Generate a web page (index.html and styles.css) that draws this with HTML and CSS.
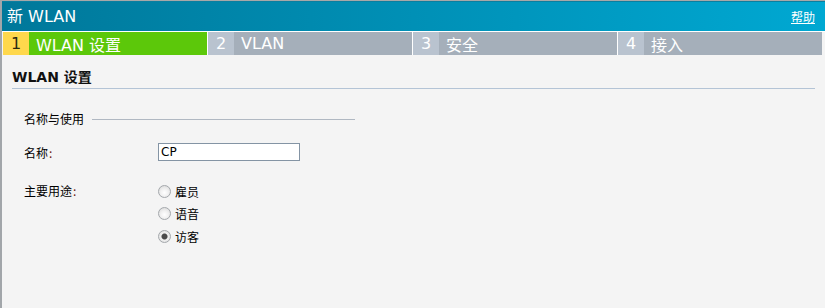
FILE: index.html
```html
<!DOCTYPE html>
<html lang="zh">
<head>
<meta charset="utf-8">
<title>新 WLAN</title>
<link rel="stylesheet" href="styles.css">
</head>
<body>
<div class="page">
  <div class="titlebar">
    <span class="title">新 WLAN</span>
    <a class="help" href="#">帮助</a>
  </div>
  <div class="steps">
    <div class="step active"><span class="num">1</span><span class="label">WLAN 设置</span></div>
    <div class="step"><span class="num">2</span><span class="label">VLAN</span></div>
    <div class="step"><span class="num">3</span><span class="label">安全</span></div>
    <div class="step"><span class="num">4</span><span class="label">接入</span></div>
  </div>
  <div class="content">
    <h2 class="heading">WLAN 设置</h2>
    <div class="group">
      <div class="legend"><span class="legend-text">名称与使用</span><span class="legend-line"></span></div>
      <div class="row name-row">
        <span class="field-label">名称<span class="colon">:</span></span>
        <input class="text-input" type="text" value="CP">
      </div>
      <div class="row use-row">
        <span class="field-label use-label">主要用途<span class="colon">:</span></span>
        <div class="radios">
          <label class="radio-item"><input type="radio" name="use" class="radio"><span>雇员</span></label>
          <label class="radio-item"><input type="radio" name="use" class="radio"><span>语音</span></label>
          <label class="radio-item"><input type="radio" name="use" class="radio" checked><span>访客</span></label>
        </div>
      </div>
    </div>
  </div>
</div>
</body>
</html>
```

FILE: styles.css
```css
html, body {
  margin: 0;
  padding: 0;
  background: #f4f4f4;
}

body {
  font-family: "DejaVu Sans", "Noto Sans CJK SC", sans-serif;
  font-size: 12px;
  color: #000;
}

.page {
  min-height: 100vh;
  box-sizing: border-box;
  border-top: 1px solid #a8a8a8;
  border-left: 2px solid #a2a6aa;
  background: #f4f4f4;
}

.titlebar {
  height: 31px;
  box-sizing: border-box;
  display: flex;
  align-items: center;
  justify-content: space-between;
  padding: 0 10px 0 5px;
  background: linear-gradient(to right, #00789a 0%, #0090b6 50%, #00a8d2 100%);
  border-top: 1px solid #0a7fa0;
  border-bottom: 1px solid #ffffff;
}

.title {
  color: #fff;
  font-size: 16px;
  line-height: 20px;
}

.help {
  color: #fff;
  font-size: 12px;
  font-family: "Noto Sans CJK SC", sans-serif;
  text-decoration: underline;
  line-height: 16px;
}

.steps {
  display: flex;
  height: 23px;
  padding-left: 1px;
}

.step {
  display: flex;
  width: 204px;
  height: 23px;
}

.step + .step {
  border-left: 1px solid #fff;
}

.num {
  width: 26px;
  flex: none;
  display: flex;
  align-items: center;
  justify-content: center;
  background: #b9c3cf;
  color: #fff;
  font-size: 16px;
}

.label {
  flex: 1;
  display: flex;
  align-items: center;
  padding-left: 7px;
  background: #a5afba;
  color: #fff;
  font-size: 16px;
  white-space: nowrap;
}

.step.active .num {
  background: #ffd84c;
  color: #2a2a10;
}

.step.active .label {
  background: #5cc80a;
}

.content {
  padding: 0 10px;
}

.heading {
  margin: 0;
  padding: 14px 0 3px 0;
  font-size: 14px;
  line-height: 16px;
  font-weight: bold;
  color: #111;
  border-bottom: 1px solid #b4c4d6;
}

.group {
  padding-left: 12px;
}

.legend {
  display: flex;
  align-items: center;
  width: 331px;
  margin-top: 23px;
  height: 14px;
}

.legend-text {
  font-family: "Noto Sans CJK SC", sans-serif;
  font-size: 12px;
  line-height: 14px;
}

.legend-line {
  flex: 1;
  margin-left: 8px;
  border-top: 1px solid #b0b8c2;
}

.row {
  display: flex;
}

.field-label {
  width: 134px;
  flex: none;
  font-family: "Noto Sans CJK SC", sans-serif;
  font-size: 12px;
}

.colon {
  color: #6a1a10;
  margin-left: 1px;
}

.name-row {
  margin-top: 17px;
  align-items: center;
}

.text-input {
  width: 142px;
  height: 18px;
  box-sizing: border-box;
  border: 1px solid #8494a4;
  background: #fff;
  padding: 0 2px;
  margin: 0;
  font-family: "DejaVu Sans", sans-serif;
  font-size: 12px;
  color: #000;
  outline: none;
}

.use-row {
  margin-top: 19px;
  align-items: flex-start;
}

.use-label {
  line-height: 22px;
}

.radios {
  display: flex;
  flex-direction: column;
}

.radio-item {
  display: flex;
  align-items: center;
  height: 22.5px;
  font-family: "Noto Sans CJK SC", sans-serif;
  font-size: 12px;
}

.radio {
  appearance: none;
  -webkit-appearance: none;
  width: 13px;
  height: 13px;
  margin: 0 4px 0 0;
  box-sizing: border-box;
  border: 1px solid #a4a8ac;
  border-radius: 50%;
  background: radial-gradient(circle at 50% 60%, #ffffff 0%, #f0f0f0 45%, #d4d4d4 100%);
}

.radio:checked {
  background: radial-gradient(circle, #4a4a4a 0 2.5px, #9a9a9a 3px, #f0f0f0 3.5px, #d8d8d8 100%);
}
```
